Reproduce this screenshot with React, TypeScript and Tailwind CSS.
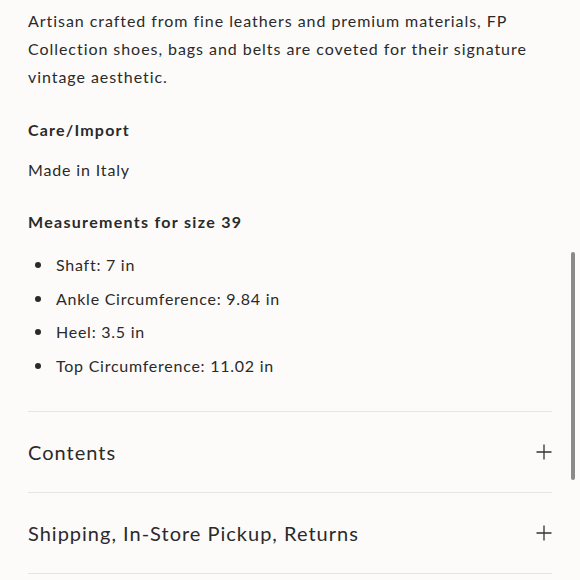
const measurements = [
    'Shaft: 7 in',
    'Ankle Circumference: 9.84 in',
    'Heel: 3.5 in',
    'Top Circumference: 11.02 in',
];

const sections = ['Contents', 'Shipping, In-Store Pickup, Returns'];

function PlusIcon() {
    return (
        <svg width="16" height="16" viewBox="0 0 16 16" className="text-[#333]">
            <path d="M8 0.5v15M0.5 8h15" stroke="currentColor" strokeWidth="1.3" fill="none" />
        </svg>
    );
}

export default function App() {
    return (
        <div className="relative h-[580px] w-[580px] overflow-hidden bg-[#fdfbfa] font-['Lato',sans-serif] text-[#2a2a2a]">
            <div className="px-[28px] pt-[7px]">
                <p className="whitespace-nowrap text-[16px] leading-[28px] tracking-[0.95px]">
                    Artisan crafted from fine leathers and premium materials, FP
                    <br />
                    Collection shoes, bags and belts are coveted for their signature
                    <br />
                    vintage aesthetic.
                </p>

                <h3 className="mt-[25px] text-[16px] font-bold leading-[28px] tracking-[1.2px]">
                    Care/Import
                </h3>
                <p className="mt-[12px] text-[16px] leading-[28px] tracking-[0.85px]">
                    Made in Italy
                </p>

                <h3 className="mt-[24px] text-[16px] font-bold leading-[28px] tracking-[1.3px]">
                    Measurements for size 39
                </h3>
                <ul className="mt-[15px]">
                    {measurements.map((m) => (
                        <li
                            key={m}
                            className="mb-[5.67px] flex items-center text-[16px] leading-[28px] tracking-[0.75px]"
                        >
                            <span className="ml-[7px] mr-[15px] h-[6px] w-[6px] rounded-full bg-[#2a2a2a]" />
                            {m}
                        </li>
                    ))}
                </ul>

                <div className="mt-[31px] w-[524px] border-t border-[#e8e4e1]">
                    {sections.map((s) => (
                        <div
                            key={s}
                            className="flex h-[81px] items-center justify-between border-b border-[#e8e4e1]"
                        >
                            <span className="text-[20px] tracking-[1px]">{s}</span>
                            <PlusIcon />
                        </div>
                    ))}
                </div>
            </div>

            <div className="absolute left-[571px] top-[252px] h-[228px] w-[4px] rounded-full bg-[#8a8a8a]" />
        </div>
    );
}
